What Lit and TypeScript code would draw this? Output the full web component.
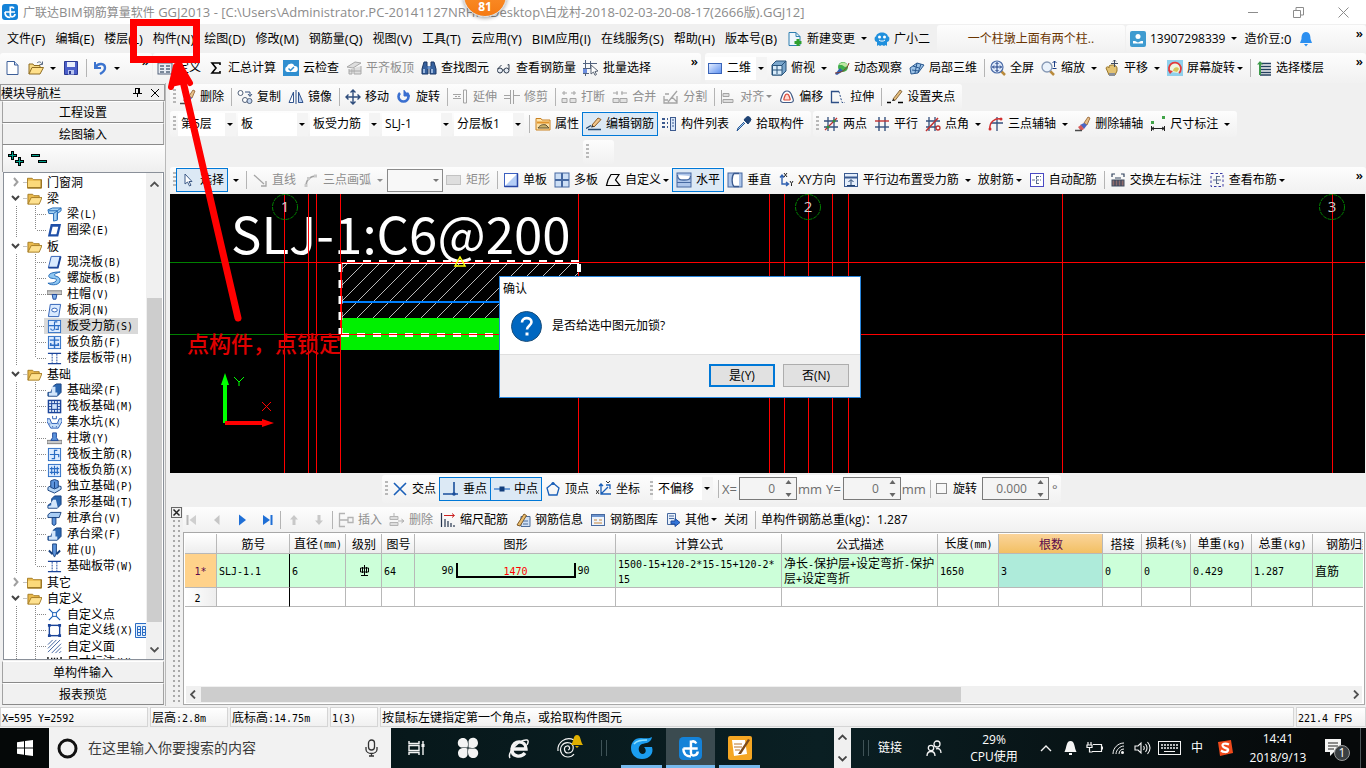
import { LitElement, html, svg, css, nothing, TemplateResult } from "lit";
import { customElement } from "lit/decorators.js";
import { classMap } from "lit/directives/class-map.js";

const BLUE = "#2a6cc4";
const GREY = "#a4a4a4";

const slab = (inner: unknown) => svg`<rect x="1.5" y="1.5" width="13" height="13" fill="#dcebff" stroke=${BLUE}/>${inner}`;

const ICONS: Record<string, unknown> = {
  app: svg`<rect width="16" height="16" rx="3" fill="#1482d8"/><path d="M8.300 2.500V8M3 8h10M3 8c0 3.500 2 5.500 5.300 5.500M8.300 8v3c0 3 4.700 2 4.700-1M8.300 3.500c1.500-.8 3-.3 3.700 1" fill="none" stroke="#fff" stroke-width="1.700"/>`,
  doc: svg`<path d="M2 1.500h7.500l3.500 3.500v9.500h-11z" fill="#fff" stroke="#3d5f99"/><path d="M9.500 1.500v3.500h3.500" fill="#cfe0f7" stroke="#3d5f99"/>`,
  open: svg`<path d="M1 14V4h4l1 1.500h6V8" fill="#f6d983" stroke="#8f6d22"/><path d="M1 14l3-6.500h11.500L12 14z" fill="#ffe08a" stroke="#8f6d22"/><path d="M9 3c2-2 4-1 5 1M14.500 1.500v3h-3" fill="none" stroke="#5a6b84"/>`,
  save: svg`<path d="M1.500 1.500h13v13h-13z" fill="#4b5fc9" stroke="#2c3a93"/><path d="M4 2h8v5H4z" fill="#e9eefb"/><path d="M5 10h6v4.500H5z" fill="#b9c5ef"/><path d="M6 11h2v3H6z" fill="#2c3a93"/>`,
  undo: svg`<path d="M3 2v6h6" fill="none" stroke="#3c74cf" stroke-width="2"/><path d="M3.500 7.500C6 2.500 13 3 13 8c0 3-2.500 4.500-5 6" fill="none" stroke="#3c74cf" stroke-width="2.400"/>`,
  define: svg`<rect x="1" y="3" width="14" height="11" fill="#e7ecf3" stroke="#56657c"/><path d="M3 6h4M3 9h4M3 12h4M9 6h4M9 9h4M9 12h4" stroke="#56657c" stroke-width="1.400"/>`,
  sigma: svg`<path d="M12 5V3H4l4 5-4 5h8v-2" fill="none" stroke="#000" stroke-width="1.600"/>`,
  cloud: svg`<rect width="16" height="16" fill="#2f8ed0"/><path d="M4 12a3 3 0 0 1 0-5.500 4 4 0 0 1 7.500-.5A3 3 0 0 1 12 12z" fill="#fff"/><path d="M5.500 8.500l2 2 3.500-3.500" fill="none" stroke="#2f8ed0" stroke-width="1.500"/>`,
  flat: svg`<path d="M1 7l8-5 6 1-8 5zM3 9v5h3V9M8 8v6h7V6" fill="#dedede" stroke="#a8a8a8"/><path d="M3 11h12" stroke="#a8a8a8"/>`,
  binoc: svg`<path d="M3 2h3v4l1 1v7H1V9zM10 2h3l2 7v5H9V7l1-1z" fill="#35609d" stroke="#1b3764"/><path d="M6.500 6h3v3h-3z" fill="#6b93cb"/><path d="M3 9v4M11 9v4" stroke="#b9d0f0" stroke-width="1.500"/>`,
  glasses: svg`<circle cx="4" cy="10.500" r="2.500" fill="#e6ecf4" stroke="#2e3a4c"/><circle cx="10.500" cy="10.500" r="2.500" fill="#e6ecf4" stroke="#2e3a4c"/><path d="M1.500 9l4-4M13 9.500V4.500l-1.500.5M6.500 10h1.500" fill="none" stroke="#2e3a4c"/>`,
  batch: svg`<path d="M2.500 0v16M0 3.500h14M0 8.500h8M0 13.500h6M7.500 1v7" stroke="#51617d"/><path d="M0 9h4v4H0z" fill="#6d8ee0"/><path d="M8 5l7 6-3 .5 1.500 3-1.500.8-1.500-3.300-2.500 2z" fill="#fff" stroke="#5a6474"/>`,
  plan: svg`<defs><linearGradient id="pl" x1="0" y1="0" x2="1" y2="1"><stop offset="0" stop-color="#e8f0ff"/><stop offset="1" stop-color="#5b8ff0"/></linearGradient></defs><rect x="1.500" y="3.500" width="13" height="10" fill="url(#pl)" stroke="#3a64b8"/>`,
  cube: svg`<path d="M1 5l4-4h10v10l-4 4H1z" fill="#7aa6cc" stroke="#27527a"/><path d="M1.500 5.500H11V15H1.500z" fill="#d9ecfa" stroke="#27527a"/><path d="M11 5l4-4M6 5v9M2 10h9" stroke="#27527a"/>`,
  orbit: svg`<circle cx="9" cy="7" r="5" fill="#3fae49"/><path d="M5 5c2-4 8-3 9 1l-3 1-3-2z" fill="#bfe7a2"/><path d="M1 14l5-6 3 3-6 4z" fill="#2f5fb3"/><path d="M1 13c6 0 12-3 14-10" fill="none" stroke="#8a3a2a"/>`,
  local3d: svg`<path d="M1 8l7-5 7 2-6 8-7 1z" fill="#9cc2e6" stroke="#29588f"/><path d="M4 6l6 2M3 10l7 1M8 3l-2 10M12 4l-3 9" stroke="#29588f"/>`,
  full: svg`<path d="M10.500 10.500l4.500 4.500" stroke="#b98a3c" stroke-width="2.500"/><circle cx="7" cy="7" r="6" fill="#dfeafa" stroke="#4b6ca8" stroke-width="1.200"/><path d="M7 2.500v9M2.500 7h9M5.500 4L7 2.500 8.500 4M5.500 10L7 11.500 8.500 10M4 5.500L2.500 7 4 8.500M10 5.500L11.500 7 10 8.500" fill="none" stroke="#1d3f86"/>`,
  zoom: svg`<path d="M8 10l5 5" stroke="#b98a3c" stroke-width="2.500"/><circle cx="6" cy="7" r="5" fill="#eaf2fb" stroke="#8799b5" stroke-width="1.300"/><path d="M13.500 1v6M11.500 3l2-2 2 2M11.500 8.500h4" fill="none" stroke="#1d3f86"/>`,
  pan: svg`<path d="M2 8c1-2 2-1 3 0V6c2-2 8-1 8 2v3l-2 4H5z" fill="#e3c272" stroke="#96742a"/><path d="M10.500 0v7M7 3.500h7M9 1.500L10.500 0 12 1.500" fill="none" stroke="#3d4a60"/><path d="M5 13h6v3H5z" fill="#8a8f99"/>`,
  screenrot: svg`<rect width="16" height="16" fill="#8fd0ec"/><path d="M3 12a6 6 0 1 1 9 1" fill="#eef7e2" stroke="#e23b3b" stroke-width="1.800"/><path d="M6 11c0-4 5-5 6-2l-2 3z" fill="#d7c75a"/><path d="M1 10l2 4 3-3z" fill="#e23b3b"/>`,
  floors: svg`<path d="M4 3.500h11M4 6.500h11M4 9.500h11M4 12.500h11M4 15h11" stroke="#24405f" stroke-width="1.500"/><path d="M4 1L1 4.500h2V15h2V4.500h2z" fill="#3d9a4a"/>`,
  brush: svg`<path d="M9 7l4-6 2 1-3 7z" fill="#e8c08a" stroke="#8d5a2a" stroke-width=".8"/><path d="M5 9l4-2 3 2-3 4z" fill="#4a66c4"/><path d="M3 11l3-2 3 4-3 2z" fill="#d65b5b"/><path d="M0 14.500h7" stroke="#4a4a4a" stroke-width="1.500"/>`,
  copy: svg`<circle cx="3.500" cy="4" r="2.500" fill="#fff" stroke="#53627a"/><circle cx="8" cy="11" r="2.500" fill="#fff" stroke="#53627a"/><circle cx="12.500" cy="12" r="2.500" fill="#c5d8f2" stroke="#53627a"/><path d="M8 3h5v4M11 5l2 2.500L15 5" fill="none" stroke="#39537f"/>`,
  mirror: svg`<path d="M5.500 3v10.500H1z" fill="#fff" stroke="#31538c"/><path d="M10.500 3v10.500H15z" fill="#b9d0f3" stroke="#31538c"/><path d="M8 1v14" stroke="#31538c"/>`,
  move: svg`<path d="M8 1v14M1 8h14M5.500 3.500L8 1l2.500 2.500M5.500 12.500L8 15l2.500-2.500M3.500 5.500L1 8l2.500 2.500M12.500 5.500L15 8l-2.500 2.500" fill="none" stroke="#2f4d7c" stroke-width="1.400"/>`,
  rotate: svg`<path d="M4 4a5 5 0 1 0 7 0" fill="none" stroke="#3a6fd0" stroke-width="2.600"/><path d="M8 1v6h6" fill="#3a6fd0" stroke="#3a6fd0"/>`,
  extend: svg`<path d="M0 5.500h8M0 9.500h8M10.500 1v13h3V1z" fill="none" stroke=${GREY}/><path d="M2 7.500h6" stroke=${GREY} stroke-dasharray="2 1"/>`,
  trim: svg`<path d="M6.500 1v14M9.500 1v14M0 6.500h6M0 9.500h6M10 6.500h6" fill="none" stroke=${GREY}/>`,
  brk: svg`<path d="M1 4h5M10 4h5M3 2v4M13 2v4M1 9.500h5v4H1zM9 9.500h6v4H9z" fill="#e2e2e2" stroke=${GREY}/>`,
  merge: svg`<path d="M1 4h5M9 4h6M5 2v4M10 2v4M1 9.500h6v4H1zM8 9.500h7v4H8z" fill="#e2e2e2" stroke=${GREY}/>`,
  split: svg`<path d="M1 7v7h13V7M1 11h4M5 13l9-11M6 5H2M9 8l5 5" fill="none" stroke=${GREY} stroke-width="1.300"/>`,
  align: svg`<path d="M1.500 1v14M3 4.500h6v3H3zM3 10.500h10v3H3z" fill="#ddd" stroke=${GREY}/>`,
  offset: svg`<path d="M8 2c3 0 4 2 5 5s3 6-1 6.500H4C0 13 2 10 3 7s2-5 5-5z" fill="#fff" stroke="#415b86" stroke-width="1.200"/><path d="M8 5c1.500 0 2 1 2.500 3s1.500 3-.5 3H6c-2 0-1-1-.5-3S6.500 5 8 5z" fill="#ffd9d0" stroke="#d84a3a" stroke-width="1.200"/>`,
  stretch: svg`<path d="M9 2.500H1.500v11H9" fill="none" stroke="#2e4f86" stroke-width="1.300"/><path d="M9 2.500l3 11h3" fill="none" stroke="#2e4f86" stroke-dasharray="2 1.500"/>`,
  pencil: svg`<path d="M0 13.500h4M11 13.500h5" stroke="#000" stroke-width="1.600"/><path d="M6 10L13 1l2 1.500-7 9z" fill="#e4bd7d" stroke="#6d4c22" stroke-width=".8"/><path d="M5 12l1-2 2 1.500z" fill="#000"/>`,
  props: svg`<path d="M1 2.500h5l1 1.500h8v10H1z" fill="#ffe3a8" stroke="#c98122"/><path d="M2 6.500h12" stroke="#e0952d" stroke-width="2"/><path d="M3 12c2-3 5-4 8-3l3 3z" fill="#c9b068" stroke="#5d5030"/>`,
  editbar: svg`<path d="M0 12.500l5-3M2 13.500h13" stroke="#24486f" stroke-width="1.400"/><path d="M6 9L12 2l3 1.500L8 11z" fill="#f0c58b" stroke="#8c5a24"/><path d="M5 11.500L6 9l2 2z" fill="#333"/>`,
  list: svg`<path d="M1 3h3M1 7h3M1 11h3M6 3h1M6 7h1M6 11h1" stroke="#3c5a8f" stroke-width="2"/><rect x="9.500" y="1.500" width="5" height="13" fill="#d8e6f8" stroke="#3c5a8f"/><path d="M11 4h2M11 7h2M11 10h2" stroke="#3c5a8f"/>`,
  pick: svg`<path d="M9 7L3 13l-2 2 1-3 6-6" fill="#a6cdf2" stroke="#2b5a96"/><path d="M8 4l4 4 1.500-2 .5-.5a2.500 2.500 0 0 0-4-4L9.500 2z" fill="#1f4374" stroke="#1f4374"/>`,
  twopt: svg`<path d="M5 1v14M11 1v14M1 5h14M1 11h14" stroke="#34507d" stroke-width="1.300"/><path d="M2 14L14 2" stroke="#c03030" stroke-width="1.300"/><circle cx="5" cy="11" r="1.500" fill="#2e8f3c"/><circle cx="11" cy="5" r="1.500" fill="#2e8f3c"/>`,
  parallel: svg`<path d="M5 1v14M11 1v14" stroke="#34507d" stroke-width="1.400"/><path d="M1 5h14" stroke="#c03030" stroke-width="1.400"/><path d="M1 11h14" stroke="#34507d" stroke-width="1.400"/>`,
  ptangle: svg`<path d="M4 1v14M10 1v14M1 5h14M1 11h10" stroke="#34507d" stroke-width="1.300"/><path d="M1 15L13 2" stroke="#c03030" stroke-width="1.500"/><circle cx="13" cy="12" r="2" fill="none" stroke="#c03030" stroke-width="1.300"/>`,
  arcaxis: svg`<path d="M9 1v14M3 7h12" stroke="#34507d" stroke-width="1.300"/><path d="M2 13C1 6 7 2 13 3" fill="none" stroke="#d13030" stroke-width="1.500"/><circle cx="2" cy="13" r="1.500" fill="#d13030"/><circle cx="13" cy="3" r="1.500" fill="#d13030"/>`,
  dim: svg`<path d="M1.500 15V10M14.500 15V10M1 12.500h14M4 11l-2.500 1.500L4 14M12 11l2.500 1.500L12 14" fill="none" stroke="#222"/><path d="M1 5h3v3H1zM12 0h3v3h-3z" fill="#40a348"/>`,
  cursor: svg`<path d="M5 2v10l2.500-2 2 4 1.500-.8-2-3.700h3z" fill="#fff" stroke="#3d5b88"/>`,
  line: svg`<path d="M2 3l10 9" stroke=${GREY} stroke-width="1.300"/><path d="M14 9v5H9" fill="none" stroke=${GREY} stroke-width="1.300"/>`,
  arc: svg`<path d="M3 14C3 8 7 4 13 4" fill="none" stroke=${GREY} stroke-width="1.500"/><path d="M1.500 12h3v3h-3zM11 2.500h3v3h-3zM4 5h3v3H4z" fill="#c9c9c9"/>`,
  rect: svg`<rect x=".5" y="3.500" width="14" height="9" fill="#dedede" stroke="#c2c2c2"/>`,
  slab1: svg`<rect x="1.500" y="1.500" width="13" height="13" fill="#fff" stroke="#3b5fc0"/><path d="M14 2v12H2z" fill="#b4cdf6"/><path d="M1.500 14.500h13v-13" stroke="#2745a3" stroke-width="1.500" fill="none"/>`,
  slab4: svg`<rect x="1" y="1" width="14" height="14" fill="#cddff5" stroke="#4669a1"/><path d="M8 1v14M1 8h14" stroke="#4669a1" stroke-width="2"/>`,
  custom: svg`<path d="M6 2.500h8L10.500 8l4.500 5.500H1.500L3 8z" fill="none" stroke="#000" stroke-width="1.200"/>`,
  horiz: svg`<rect x="1" y="1" width="14" height="14" fill="#aec6ea" stroke="#4669a1"/><path d="M1.500 3c0 5 3 5 6.500 5s6.500 0 6.500-4" fill="#fff" stroke="#4669a1" stroke-width="1.300"/><path d="M1 10.500h14" stroke="#4669a1"/>`,
  vert: svg`<rect x="1" y="1" width="14" height="14" fill="#aec6ea" stroke="#4669a1"/><path d="M12 1.500H7C4.500 4 4.500 12 7 14.500h5" fill="#fff" stroke="#3a5a90" stroke-width="1.300"/>`,
  xy: svg`<path d="M4 4v8h6M2 5.500L4 3l2 2.500M8 10l2.500 2L8 14" fill="none" stroke="#2e5fb0" stroke-width="1.400"/><path d="M6 1l3 4M9 1L6 5M12 9l1.500 2.500L15 9M13.500 11.500V14" fill="none" stroke="#222"/>`,
  edge: svg`<rect x="1.500" y="1.500" width="13" height="13" fill="#e4eefb" stroke="#3a5a90"/><path d="M1 5.500h14" stroke="#3a5a90" stroke-width="2"/><path d="M8 13V8M5.500 10L8 7.500 10.500 10M4 13.500h8" fill="none" stroke="#20406f"/>`,
  auto: svg`<rect x="1.500" y="1.500" width="13" height="13" fill="#fff" stroke="#4a4ac4"/><path d="M7.500 4v8M7 4.500h5M7 11.500h3M3 8h9" fill="none" stroke="#5a6b8c" stroke-dasharray="3 1"/>`,
  swap: svg`<rect x="2" y="8" width="12" height="6" fill="#8d6b6b" stroke="#3f4c60"/><path d="M2 5V2h3M14 5V2h-3M5 6h6M5 8v6M8 8v6M11 8v6" fill="none" stroke="#33445e" stroke-width="1.200"/>`,
  viewbar: svg`<rect x="2" y="1.500" width="12" height="13" fill="none" stroke="#3a3aa4" stroke-dasharray="2.500 2"/><path d="M7.500 4v8M7 4.500h4M7 11.500h3M4 8h8" fill="none" stroke="#5a6b8c"/>`,
  newchg: svg`<path d="M2 1.500h7l4 4v9H2z" fill="#eef6fc" stroke="#2e7fb0"/><path d="M9 1.500v4h4" fill="none" stroke="#2e7fb0"/><path d="M11 8v7M7.500 11.500h7" stroke="#2fa02f" stroke-width="3"/>`,
  robot: svg`<path d="M3 15v-4C1 11 0 8 1 6c1-1 1 0 1 0 0-6 12-6 12 0 0 0 0-1 1 0 1 2 0 5-2 5v4l-1.500-1L10 15l-2-1-2 1-1.500-1z" fill="#2090dd"/><circle cx="5.500" cy="6" r="1.500" fill="#fff"/><circle cx="10.500" cy="6" r="1.500" fill="#fff"/><path d="M5 9c1.500 1.500 4.500 1.500 6 0" fill="none" stroke="#fff"/>`,
  user: svg`<rect width="16" height="16" rx="2" fill="#3f9bd0"/><circle cx="8" cy="5.500" r="2.500" fill="#fff"/><path d="M3 12.500V10h2l3 1.500L11 10h2v2.500z" fill="#fff"/>`,
  bell: svg`<path d="M8 1c4 0 4.500 4 4.500 7l1.500 4H2l1.500-4c0-3 .5-7 4.500-7z" fill="#2b8ff0"/><path d="M6 13h4l-2 2.500z" fill="#2b8ff0"/>`,
  cross: svg`<path d="M2 2l12 12M14 2L2 14" stroke="#1a5fb8" stroke-width="1.600"/>`,
  perp: svg`<path d="M11 1v12M0 13h15" stroke="#1a4f9c" stroke-width="1.600"/><circle cx="11" cy="13" r="1.800" fill="#1a4f9c"/>`,
  mid: svg`<path d="M0 8h16" stroke="#4b86cf" stroke-width="1.500"/><path d="M5.500 5.500h5v5h-5z" fill="#113d7c"/>`,
  apex: svg`<path d="M8 2L14 7l-2 7H4L2 7z" fill="none" stroke="#1a5fb8" stroke-width="1.300"/><circle cx="8" cy="2.500" r="1.600" fill="#1a5fb8"/>`,
  coord: svg`<path d="M5 3v10h10M5 13l7-7M3 5l2-2 2 2M10 4h4v4" fill="none" stroke="#1a5fb8" stroke-width="1.300"/><path d="M0 9l3 4M3 9l-3 4M10 0l2 2 2-2" fill="none" stroke="#333"/>`,
  first: svg`<path d="M3.500 3v10" stroke="#b9b9b9" stroke-width="2"/><path d="M12 3v10L5.500 8z" fill="#cfcfcf"/>`,
  prev: svg`<path d="M10.500 3v10L5 8z" fill="#c6c6c6"/>`,
  next: svg`<path d="M5 2.500v11L12 8z" fill="#1f6fd6"/>`,
  last: svg`<path d="M12.500 3v10" stroke="#1f6fd6" stroke-width="2"/><path d="M4 3v10l7-5z" fill="#1f6fd6"/>`,
  up: svg`<path d="M8 3l4 4.500h-2.500V13h-3V7.500H4z" fill="#c8c8c8"/>`,
  down: svg`<path d="M8 13L4 8.500h2.500V3h3v5.500H12z" fill="#c8c8c8"/>`,
  insert: svg`<path d="M1 1.500h6M1 8h6M1 14.500h6M1.500 1v14M10 5.500h5v5h-5zM7 8h3" fill="none" stroke="#b3b3b3" stroke-width="1.300"/>`,
  remove: svg`<path d="M1 4.500h8v3H1zM1 10.500h8v3H1zM9 9h6M12.500 7l2.500 2-2.500 2M5 1v3" fill="#ddd" stroke="#b3b3b3"/>`,
  scalebar: svg`<path d="M1.500 1v14M5 7v8M8 9v6M11 11v4M14 13v2" stroke="#26364f" stroke-width="1.200"/><path d="M4 3.500h10M12 1.500l2.500 2-2.500 2" fill="none" stroke="#c22"/>`,
  barinfo: svg`<path d="M6 4.500h9v10H6z" fill="#cfe0f5" stroke="#4d6c9a"/><path d="M2 13L9 2l2.500 1.500L5 14z" fill="#e9bd70" stroke="#7d5723"/><path d="M8 9h5M8 12h5" stroke="#4d6c9a"/>`,
  barlib: svg`<rect x="1.500" y="2.500" width="13" height="11" fill="#eef4fb" stroke="#47699f"/><path d="M2 4h12" stroke="#6e95cf" stroke-width="2"/><path d="M4 8h3M9 8h3M4 11h8" stroke="#c8863c"/>`,
  other: svg`<path d="M2.500 1.500h8v11h-8z" fill="#e8f0fa" stroke="#47699f"/><path d="M4 4h5M4 6.500h5" stroke="#47699f"/><path d="M6 9h4V6.500l5 4-5 4V12H6z" fill="#3274d8" stroke="#1c4a9c"/>`,
  folder: svg`<path d="M.5 3.500h5l1.500 1.500h8.500v9H.5z" fill="#e9b94c" stroke="#a47b23"/><path d="M1 6h14v7.500H1z" fill="#fbd97a"/><path d="M1 13.500h14V5" fill="none" stroke="#8b6719"/>`,
  folderO: svg`<path d="M1 14V3.500h5l1.500 1.500H13V7" fill="#e9b94c" stroke="#a47b23"/><path d="M1 14l3.500-7H16l-3 7z" fill="#fde08e" stroke="#a47b23"/>`,
  tBeam: svg`<path d="M1 3l5-2h9v3l-4 3v7l-4 1V7H2z" fill="#a7d3f4" stroke="#1e66b4"/><path d="M2 4h9l4-3M7 7l4-3v9" fill="none" stroke="#1e66b4"/>`,
  tRing: svg`<path d="M4 1h11l-3 13.500H1z" fill="#1e4fa8"/><path d="M6 4h6l-2 8H4z" fill="#fff"/>`,
  tSlab: svg`<path d="M4.500 1.500h10l-3 12h-10z" fill="#d9eaff" stroke="#2a5cb4"/><path d="M1.500 13.500h10l3-12" fill="none" stroke="#1c459a" stroke-width="2"/>`,
  tSpiral: svg`<path d="M14 1C6 1 1 3 2 6s9 1 8 4-6 3-9 3c4 3 13 2 13-3S7 6 8 4s4-2 6-3z" fill="#8fc7f2" stroke="#1e66b4"/>`,
  tCap: svg`<path d="M0 4h16v4H0z" fill="#c8c8c8" stroke="#666" stroke-width=".8"/><path d="M5.500 8h5l-1 5h-3z" fill="#7fb0ea" stroke="#1c459a"/>`,
  tHole: svg`<path d="M3.500 1.500h11l-2 13h-11z" fill="#d9eaff" stroke="#2a5cb4"/><ellipse cx="8" cy="7.500" rx="3" ry="2" fill="#fff" stroke="#2a5cb4"/>`,
  tBar: slab(svg`<path d="M8 3v7a2 2 0 0 1-4 0M2 7h12M8 3h3M12 7v4h-3" fill="none" stroke=${BLUE} stroke-width="1.200"/>`),
  tNeg: slab(svg`<path d="M3 5.500h10M3 11h10M8 2v12M4 8.500V11M12 8.500V11" fill="none" stroke=${BLUE} stroke-width="1.500"/>`),
  tStrip: svg`<path d="M1 2.500h14M1 13.500h14" stroke="#1c459a" stroke-width="1.500"/><path d="M5.500 3v10M10.500 3v10" stroke="#1c459a" stroke-dasharray="2 1"/>`,
  tFBeam: svg`<path d="M1 14v-4h3l3-7 3-2h5v9l-4 4z" fill="#2a66b0" stroke="#16407e"/><path d="M2 13.500v-3h3V4h4v6h2v3.500z" fill="#d3e6fb"/>`,
  tRaft: svg`<rect x="1.500" y="1.500" width="13" height="13" fill="#e4effd" stroke="#1c459a" stroke-width="1.500"/><path d="M5 2v12M8 2v12M11 2v12M2 5h12M2 8h12M2 11h12" stroke="#1c459a"/><rect x="5" y="5" width="6" height="6" fill="#cfe2fa" stroke="#1c459a"/>`,
  tPit: svg`<path d="M0 4h3l2 5h6l2-5h3v3l-4 7H4L0 7z" fill="#c5defa" stroke="#2a5cb4"/><path d="M6 1v3M10 1v3M6 4h4" stroke="#2a5cb4"/><path d="M3 9v1M6 12v1M10 12v1M12 9v1" stroke="#1c459a"/>`,
  tPier: svg`<path d="M0 10h16v3.500H0z" fill="#c8c8c8" stroke="#666" stroke-width=".8"/><path d="M4 10l2-3V2h4v5l2 3z" fill="#5c94dc" stroke="#1c459a"/>`,
  tMain: slab(svg`<path d="M8 3v10M3 8h10M8 3.500h3M8 12.500H5M12.500 8v3" fill="none" stroke=${BLUE} stroke-width="1.300"/>`),
  tSub: slab(svg`<path d="M3 6h10M3 10h10M8 3v10M5 4v8M11 4v8" fill="none" stroke=${BLUE} stroke-width="1.200"/>`),
  tIso: svg`<path d="M1 9l5-3 9 2v3l-7 4-7-3z" fill="#b9d8f7" stroke="#16407e"/><path d="M4 2l4-1.500L12 2v7l-4 1.500L4 9z" fill="#5c94dc" stroke="#16407e"/><path d="M8 3v7" stroke="#16407e"/>`,
  tStripF: svg`<path d="M1 14v-3l4-3V4l3-3h7v9l-4 4z" fill="#2a66b0" stroke="#16407e"/><path d="M1.500 13.500V12l3-1V8l2-3h3l1 4 1 4.500z" fill="#d3e6fb"/>`,
  tPileCap: svg`<path d="M1 4l3-2.500h11L13 7H1z" fill="#a9cdf4" stroke="#16407e"/><path d="M5.500 7h4v7l-2 1.500-2-1.500z" fill="#5c94dc" stroke="#16407e"/>`,
  tPile: svg`<path d="M6 1h4v10l-2 4-2-4z" fill="#5c94dc" stroke="#16407e"/><path d="M2 8l4 4M14 8l-4 4" stroke="#16407e" stroke-width="2"/>`,
  tPoint: svg`<path d="M2 2l12 12M14 2L2 14" stroke="#1a5fb8" stroke-width="1.300"/><path d="M6 6h4v4H6z" fill="#fff" stroke="#1a5fb8"/>`,
  tLine: svg`<rect x="2.500" y="2.500" width="11" height="11" fill="#fff" stroke="#1c459a" stroke-width="1.500"/><path d="M1 1h3v3H1zM12 1h3v3h-3zM1 12h3v3H1zM12 12h3v3h-3z" fill="#1c459a"/>`,
  tFace: svg`<path d="M1 6l5-5M1 10l9-9M1 14l13-13M5 15L15 5M9 15l6-6M13 15l2-2" stroke="#3b5f9c"/>`,
  tDim: svg`<path d="M1 2v10M15 2v10M1 5h14M5 3v6M8 3v6M11 3v6" stroke="#111" stroke-width="1.500"/>`,
};

const ic = (name: string) => html`<svg class="ic" viewBox="0 0 16 16" aria-hidden="true">${ICONS[name]}</svg>`;

/* Wraps each Latin run of a label in a span of its own, so that it can take its own face and size. */
const latin = (s: string, cls: string) =>
  s.split(/([\x20-\x7e]+)/).filter(Boolean).map((p) => (/^[\x20-\x7e]/.test(p) ? html`<span class=${cls}>${p}</span>` : p));
const m = (s: string) => latin(s, "n");
const ui = (s: string) => latin(s, "l");

type Item = string | { i?: string; t?: string; a?: "wide" | "tight"; off?: boolean; on?: boolean };

const sep = html`<span class="sep"></span>`;
const grip = html`<span class="grip"></span>`;
const more = html`<button class="more" aria-label="更多">»</button>`;

const item = (x: Item): TemplateResult => {
  if (x === "|") return sep;
  if (x === ":") return grip;
  if (typeof x === "string") return html`<button class="tb">${x}</button>`;
  return html`<button class=${classMap({ tb: true, off: !!x.off, on: !!x.on })} aria-label=${x.t || x.i || "下拉"}>
    ${x.i ? ic(x.i) : nothing}${x.t ? html`<span>${x.t}</span>` : nothing}${x.a ? html`<i class="arr ${x.a}"></i>` : nothing}
  </button>`;
};

const combo = (label: string, value: string, cls = "") => html`<span class="combo ${cls}">
  <select aria-label=${label}><option>${value}</option></select><i class="arr"></i></span>`;

const TITLE = "广联达BIM钢筋算量软件 GGJ2013 - [C:\\Users\\Administrator.PC-20141127NRHN\\Desktop\\白龙村-2018-02-03-20-08-17(2666版).GGJ12]";

const MENUS = ["文件(F)", "编辑(E)", "楼层(L)", "构件(N)", "绘图(D)", "修改(M)", "钢筋量(Q)", "视图(V)", "工具(T)", "云应用(Y)", "BIM应用(I)", "在线服务(S)", "帮助(H)", "版本号(B)"];

const BAR_B: Item[] = [
  { i: "define", t: "定义" }, { i: "sigma", t: "汇总计算" }, { i: "cloud", t: "云检查" }, { i: "flat", t: "平齐板顶", off: true },
  { i: "binoc", t: "查找图元" }, { i: "glasses", t: "查看钢筋量" }, { i: "batch", t: "批量选择" },
];
const BAR_C: Item[] = [
  { i: "cube", t: "俯视", a: "wide" }, { i: "orbit", t: "动态观察" }, { i: "local3d", t: "局部三维" }, "|",
  { i: "full", t: "全屏" }, { i: "zoom", t: "缩放", a: "wide" }, { i: "pan", t: "平移", a: "wide" },
  { i: "screenrot", t: "屏幕旋转", a: "tight" }, "|", { i: "floors", t: "选择楼层" },
];
const BAR_EDIT: Item[] = [
  ":", { i: "brush", t: "删除" }, "|", { i: "copy", t: "复制" }, { i: "mirror", t: "镜像" }, "|", { i: "move", t: "移动" }, { i: "rotate", t: "旋转" }, "|",
  { i: "extend", t: "延伸", off: true }, { i: "trim", t: "修剪", off: true }, "|", { i: "brk", t: "打断", off: true }, { i: "merge", t: "合并", off: true },
  { i: "split", t: "分割", off: true }, "|", { i: "align", t: "对齐", off: true, a: "tight" }, { i: "offset", t: "偏移" }, { i: "stretch", t: "拉伸" }, "|",
  { i: "pencil", t: "设置夹点" },
];
const BAR_PART: Item[] = [{ i: "props", t: "属性" }, { i: "editbar", t: "编辑钢筋", on: true }, { i: "list", t: "构件列表" }, { i: "pick", t: "拾取构件" }];
const BAR_AXIS: Item[] = [
  ":", { i: "twopt", t: "两点" }, { i: "parallel", t: "平行" }, { i: "ptangle", t: "点角", a: "wide" }, { i: "arcaxis", t: "三点辅轴", a: "wide" },
  { i: "brush", t: "删除辅轴" }, { i: "dim", t: "尺寸标注", a: "wide" },
];
const BAR_SELECT: Item[] = [
  { i: "cursor", t: "选择", on: true }, { a: "tight" }, "|", { i: "line", t: "直线", off: true }, { i: "arc", t: "三点画弧", off: true, a: "wide" },
];
const BAR_DRAW: Item[] = [
  { i: "rect", t: "矩形", off: true }, "|", { i: "slab1", t: "单板" }, { i: "slab4", t: "多板" }, { i: "custom", t: "自定义", a: "tight" },
  { i: "horiz", t: "水平", on: true }, { i: "vert", t: "垂直" }, { i: "xy", t: "XY方向" }, { i: "edge", t: "平行边布置受力筋", a: "wide" },
  { t: "放射筋", a: "tight" }, { i: "auto", t: "自动配筋" }, "|", { i: "swap", t: "交换左右标注" }, { i: "viewbar", t: "查看布筋", a: "tight" },
];
const BAR_SNAP: Item[] = [
  ":", { i: "cross", t: "交点" }, { i: "perp", t: "垂点", on: true }, { i: "mid", t: "中点", on: true }, { i: "apex", t: "顶点" }, { i: "coord", t: "坐标" },
];
const BAR_GRID: Item[] = [
  { i: "insert", t: "插入", off: true }, { i: "remove", t: "删除", off: true }, { i: "scalebar", t: "缩尺配筋" }, { i: "barinfo", t: "钢筋信息" },
  { i: "barlib", t: "钢筋图库" }, { i: "other", t: "其他", a: "tight" }, "关闭", "|",
];

interface Node { t: string; i: string; lvl: 0 | 1; open?: boolean; sel?: boolean; last?: boolean; extra?: boolean }
const leaf = (t: string, i: string, o: Partial<Node> = {}): Node => ({ t, i, lvl: 1, ...o });
const TREE: Node[] = [
  { t: "门窗洞", i: "folder", lvl: 0 },
  { t: "梁", i: "folderO", lvl: 0, open: true },
  leaf("梁(L)", "tBeam"), leaf("圈梁(E)", "tRing", { last: true }),
  { t: "板", i: "folderO", lvl: 0, open: true },
  leaf("现浇板(B)", "tSlab"), leaf("螺旋板(B)", "tSpiral"), leaf("柱帽(V)", "tCap"), leaf("板洞(N)", "tHole"),
  leaf("板受力筋(S)", "tBar", { sel: true }), leaf("板负筋(F)", "tNeg"), leaf("楼层板带(H)", "tStrip", { last: true }),
  { t: "基础", i: "folderO", lvl: 0, open: true },
  leaf("基础梁(F)", "tFBeam"), leaf("筏板基础(M)", "tRaft"), leaf("集水坑(K)", "tPit"), leaf("柱墩(Y)", "tPier"), leaf("筏板主筋(R)", "tMain"),
  leaf("筏板负筋(X)", "tSub"), leaf("独立基础(P)", "tIso"), leaf("条形基础(T)", "tStripF"), leaf("桩承台(V)", "tPileCap"), leaf("承台梁(F)", "tFBeam"),
  leaf("桩(U)", "tPile"), leaf("基础板带(W)", "tStrip", { last: true }),
  { t: "其它", i: "folder", lvl: 0 },
  { t: "自定义", i: "folderO", lvl: 0, open: true },
  leaf("自定义点", "tPoint"), leaf("自定义线(X)", "tLine", { extra: true }), leaf("自定义面", "tFace"), leaf("尺寸标注(W)", "tDim"),
];

const COLS: [string, number][] = [
  ["", 32], ["筋号", 73], ["直径(mm)", 56], ["级别", 36], ["图号", 33], ["图形", 201], ["计算公式", 166], ["公式描述", 156], ["长度(mm)", 61],
  ["根数", 104], ["搭接", 39], ["损耗(%)", 49], ["单重(kg)", 61], ["总重(kg)", 61], ["钢筋归类", 74],
];

const V_AXES = [284, 308, 316, 340, 578, 769, 784, 808, 832, 848, 1062, 1332];
const BUBBLES: [number, string][] = [[285, "1"], [808, "2"], [1332, "3"]];

@customElement("app-root")
export class AppRoot extends LitElement {
  static styles = css`
    :host {
      display: flex; flex-direction: column; position: relative; height: 100vh; overflow: hidden; background: #f0f0f0; color: #000;
      font: 12px/16px "Open Sans", "Noto Sans CJK SC", sans-serif;
    }
    * { box-sizing: border-box; }
    button, input, select { font: inherit; color: inherit; border: 0; background: none; padding: 0; margin: 0; border-radius: 0; outline: 0; }
    button { white-space: nowrap; display: inline-flex; align-items: center; flex: none; }
    svg { display: block; flex: none; }
    .ic { width: 16px; height: 16px; }
    .n { font-family: "DejaVu Sans Mono", monospace; font-size: 10px; }
    .l { font-size: 13px; white-space: pre; }
    .song { font-family: "Noto Sans CJK SC", sans-serif; }

    .title { display: flex; align-items: center; height: 24px; flex: none; background: #fff; color: #8c8c8c; padding-left: 2px; }
    .title h1 { flex: 1; margin: 0 0 0 5px; font: inherit; white-space: nowrap; overflow: hidden; }
    .title button { width: 45px; height: 20px; justify-content: center; }

    .menu { display: grid; grid-template-columns: 936px 188px 1fr; gap: 1px; height: 29px; flex: none; padding: 1px 0; }
    .menu nav { display: flex; align-items: center; gap: 10px; padding-left: 7px; overflow: hidden; }
    .menu nav .tb { margin: 0 -3px 0 0; }
    .strip { display: flex; align-items: center; background: linear-gradient(#fdfdfd, #f1f1f1); border-radius: 3px; position: relative; white-space: nowrap; min-width: 0; }
    .news { justify-content: center; color: #6a3500; }
    .acct { padding-left: 4px; }

    .tb { margin-right: 7px; height: 24px; }
    .tb .ic { margin-right: 4px; }
    .tb.off { color: #8e8e8e; }
    .tb.on { background: #dce9f5; border: 1px solid #0078d7; padding: 0 3px; margin: 0 3px 0 -4px; }
    .arr { border: 3px solid transparent; border-top-color: #000; border-bottom: 0; width: 6px; height: 3px; flex: none; }
    .arr.wide { margin-left: 6px; }
    .arr.tight { margin-left: 2px; }
    .off .arr { border-top-color: #8e8e8e; }
    .icon-only .ic { margin-right: 0; }
    .sep { width: 1px; height: 18px; background: #b4b4b4; margin-right: 5px; flex: none; }
    .grip { width: 3px; height: 16px; margin: 0 4px 0 3px; flex: none; background: repeating-linear-gradient(#b8b8b8 0 2px, transparent 2px 4px); }
    .grip + .combo { margin-left: -2px; }
    .more { position: absolute; right: 3px; top: 0; font-size: 13px; height: 16px; font-weight: 600; }
    .combo { display: inline-flex; align-items: center; width: 70px; height: 23px; margin-right: 2px; background: linear-gradient(90deg, #fff 0 calc(100% - 11px), #f4f4f4 0); position: relative; flex: none; }
    .combo select { appearance: none; flex: 1; min-width: 0; height: 23px; padding-left: 3px; }
    .combo .arr { position: absolute; right: 3px; pointer-events: none; }
    .combo.s { width: 58px; }
    .combo.l5 { margin-right: 5px; }
    .combo.box { width: 56px; border: 1px solid #8a8a8a; margin-right: 3px; background: #f8f8f8; margin-left: -3px; }
    .combo.box .arr { border-top-color: #777; }
    .combo.ico select { padding-left: 4px; }

    .row3 { display: flex; height: 30px; flex: none; gap: 1px; }
    .bar-a { width: 152px; padding-left: 5px; flex: none; }
    .bar-b { width: 548px; padding-left: 4px; flex: none; margin-right: 3px; }
    .bar-c { flex: 1; }
    .bar-c .combo { width: 62px; margin-right: 4px; padding-left: 2px; }

    .body { display: flex; flex: 1; min-height: 0; }
    .side { width: 166px; margin-right: 4px; flex: none; display: flex; flex-direction: column; border-right: 1px solid #b9b9b9; padding-bottom: 1px; }
    .side-head { display: flex; align-items: center; height: 17px; margin-top: 1px; border: 1px solid #9a9a9a; flex: none; }
    .side-head span { flex: 1; }
    .side-head button { width: 18px; justify-content: center; }
    .side-btn { height: 22px; margin: 0 1px 0 2px; border: 1px solid #a2a2a2; border-bottom-color: #8a8a8a; justify-content: center; background: #f1f1f1; border-top-color: #fff; }
    .side-tools { display: flex; align-items: center; height: 27px; margin-left: 2px; padding-left: 5px; gap: 7px; background: linear-gradient(#fdfdfd, #eee); flex: none; border-left: 1px solid #a2a2a2; }
    .tree { flex: 1; min-height: 0; margin: 0 1px 1px 3px; border: 1px solid #8a9099; background: #fff; display: flex; overflow: hidden; }
    .tree ul { list-style: none; margin: 0; padding: 1px 0 0; flex: 1; min-width: 0; overflow: hidden; }
    .tree li { display: flex; align-items: center; height: 16px; white-space: nowrap; }
    .tree li .ic { width: 15px; height: 15px; }
    .tree li > svg { overflow: visible; }
    .node { display: flex; align-items: center; height: 16px; padding: 0 2px 0 3px; gap: 5px; }
    .node.sel { background: #d9d9d9; padding-right: 5px; }
    .vscroll { width: 16px; background: #f0f0f0; display: flex; flex-direction: column; align-items: center; flex: none; margin-right: 1px; padding: 8px 0 6px; }
    .vscroll i { width: 15px; flex: 321; background: #cdcdcd; margin-bottom: 25px; }
    .vscroll .top { flex: 110; background: none; margin: 0; }

    .main { flex: 1; min-width: 0; display: flex; flex-direction: column; }
    .r { display: flex; align-items: center; height: 28px; flex: none; gap: 2px; }
    .r.first { height: 27px; }
    .r .strip { height: 26px; }
    .r .grow { flex: 1; }
    .r .stub { height: 24px; width: 31px; margin-left: 413px; }
    .canvas { flex: 1; min-height: 0; position: relative; background: #000; overflow: hidden; margin-right: 1px; }
    .canvas > svg { width: 100%; height: 100%; }

    .dialog { position: absolute; left: 329px; top: 82px; width: 362px; background: #fff; border: 1px solid #2a86dc; display: flex; flex-direction: column; }
    .dialog h2 { font: inherit; margin: 4px 3px; }
    .dialog .msg { display: flex; align-items: center; gap: 10px; height: 53px; padding: 0 0 3px 11px; }
    .dialog .foot { display: flex; justify-content: flex-end; gap: 8px; padding: 9px 11px 10px; background: #f0f0f0; border-top: 1px solid #dfdfdf; }
    .dialog .foot button { width: 66px; height: 23px; justify-content: center; background: #e1e1e1; border: 1px solid #adadad; }
    .dialog .foot .def { border: 2px solid #0078d7; }

    .snap { display: flex; align-items: center; height: 31px; flex: none; padding-left: 212px; }
    .snap .strip { height: 28px; padding-right: 4px; }
    .snap label { color: #6d6d6d; display: inline-flex; align-items: center; gap: 2px; font-size: 13px; }
    .snap .combo { width: 60px; margin: 0 5px 0 -4px; }
    .snap .combo select { padding-left: 5px; }
    .snap .combo + .sep { margin-right: 3px; }
    .spin { display: inline-flex; align-items: center; width: 58px; height: 23px; border: 1px solid #7a7a7a; background: #f4f4f4; padding-right: 4px; color: #6d6d6d; font-size: 12px; }
    .spin input { flex: 1; min-width: 0; text-align: right; padding-right: 10px; color: #6d6d6d; }
    .spin.w { width: 67px; }
    .snap .u { color: #6d6d6d; font-size: 13px; margin: 0 4px 0 1px; }
    .snap .deg { margin: 0 0 0 3px; }
    .snap input[type="checkbox"] { appearance: none; width: 11px; height: 11px; border: 1px solid #8a8a8a; margin-right: 6px; background: #f7f7f7; }
    .snap .rot { color: #000; font-size: 12px; margin-right: 5px; }

    .bottom { display: flex; height: 202px; flex: none; padding-top: 3px; }
    .split { width: 13px; flex: none; display: flex; flex-direction: column; align-items: center; gap: 2px; }
    .split i { width: 8px; flex: 1; margin-bottom: 2px; background-image: radial-gradient(circle at 1px 1px, #a9a9a9 1px, transparent 1px); background-size: 5px 5px; }
    .pane { flex: 1; min-width: 0; display: flex; flex-direction: column; }
    .pane .strip { height: 25px; border-radius: 0; padding-left: 1px; }
    .nav2 { margin-right: 9px; height: 24px; }
    .nav2:has(+ .sep) { margin-right: 5px; }
    .sheet { flex: 1; min-height: 0; background: #fff; border: 1px solid #a8a8a8; margin: 0 1px 1px 0; padding: 1px; display: flex; flex-direction: column; }
    .clip { flex: 1; overflow: hidden; }
    table { border-collapse: separate; border-spacing: 0; table-layout: fixed; width: 1202px; line-height: 13px; }
    th, td { padding: 0 1px 0 2px; border-right: 1px solid #b8b8b8; border-bottom: 1px solid #b8b8b8; text-align: left; font-weight: 400; white-space: nowrap; overflow: hidden; }
    thead th { height: 20px; text-align: center; background: linear-gradient(#fff, #ededed); }
    thead .hot { background: linear-gradient(#fbd49b, #f2c063); color: #5a0a4a; }
    tbody th { text-align: center; background: linear-gradient(90deg, #fff, #eee); padding-right: 8px; }
    .cur td { height: 34px; background: #ccffd9; }
    .cur th { background: #ffd28a; color: #5a0a4a; padding-right: 2px; }
    .cur .cell { background: #aeebda; }
    .cur .wrap { white-space: normal; word-break: break-all; }
    .nxt td, .nxt th { height: 19px; }
    .mark { border-right-color: #000; }
    .shape { display: flex; align-items: center; justify-content: center; gap: 2px; }
    .shape b { width: 120px; height: 15px; border: solid #000; border-width: 0 2px 2px; text-align: center; color: #f00; font-weight: 400; }
    .mid svg { margin: 0 auto; }
    .hscroll { height: 17px; background: #f0f0f0; display: flex; align-items: center; justify-content: space-between; padding: 0 3px 0 4px; margin: 0 1px; flex: none; }
    .hscroll i { height: 15px; width: 760px; background: #cdcdcd; margin: 0 auto 0 5px; }

    .status { display: flex; height: 22px; flex: none; gap: 2px; padding: 1px 0; background: #f0f0f0; }
    .status span:not(.n) { border: 1px solid #d5d5d5; background: linear-gradient(#fff, #f0f0f0); padding: 1px; white-space: nowrap; overflow: hidden; flex: none; }
    .status .a { width: 148px; } .status .b { width: 78px; } .status .c { width: 98px; } .status .d { width: 48px; }
    .status .e.e { flex: 1; } .status .f { width: 70px; }

    .task { display: flex; height: 40px; flex: none; background: linear-gradient(90deg, #040a0b, #07181b 30%, #0a1f23 60%, #06090a 96%); color: #fff; align-items: stretch; }
    .task button { justify-content: center; }
    .start { width: 49px; background: #050808; }
    .search { display: flex; align-items: center; width: 342px; background: #f2f2f2; color: #3b3b3b; padding: 0 13px 0 8px; gap: 10px; font-size: 14px; flex: none; }
    .search input { flex: 1; min-width: 0; }
    .search input::placeholder { color: #3b3b3b; opacity: 1; }
    .app { width: 51px; }
    .app + .bars { margin-right: 5px; }
    .run { width: 41px; margin: 0 4px; border-bottom: 3px solid #76b9ed; padding-top: 3px; }
    .run.cur2 { width: 49px; margin: 0; background: #3b4b50; }
    .bars { width: 17px; display: flex; align-items: center; justify-content: center; flex: none; }
    .bars::before { content: ""; width: 4px; height: 16px; border: solid #3f5357; border-width: 0 1px; }
    .sp { flex: 1; }
    .updn { width: 17px; background: #f0f0f0; display: flex; flex-direction: column; align-items: center; justify-content: space-between; padding: 6px 0; margin-right: 6px; }
    .link { width: 32px; margin-right: 7px; }
    .ppl { width: 42px; margin-right: 1px; }
    .cpu, .clock { display: flex; flex-direction: column; justify-content: center; text-align: center; line-height: 17px; width: 76px; flex: none; }
    .clock { line-height: 19px; }
    .cpu { margin-right: 2px; }
    .tray { width: 24px; } .kb { width: 31px; }
    .note { width: 45px; border-right: 1px solid #4c5558; margin-right: 5px; }
    .ink { position: absolute; left: 0; top: 0; width: 360px; height: 330px; pointer-events: none; }
    .ball { position: absolute; left: 463px; top: -27px; width: 44px; height: 44px; border-radius: 50%; background: linear-gradient(#ff9d3c, #f57a12); border: 1px solid #d9dde0; box-shadow: 0 1px 4px #0006; color: #fff; font-weight: 700; text-align: center; padding-top: 25px; }
  `;

  private treeRow(n: Node) {
    const guide = n.lvl === 0
      ? svg`${n.open
          ? svg`<path d="M8 6l3.500 3.500L15 6" fill="none" stroke="#444" stroke-width="2"/>`
          : svg`<path d="M10 4l3.500 4L10 12" fill="none" stroke="#a0a0a0" stroke-width="2"/>`}
          <path d="M19.500 8.500h4" stroke="#888" stroke-dasharray="1 1"/>`
      : svg`<path d="M12.500 0v16M31.500 0v${n.last ? 8 : 16}M33 8.500h10" stroke="#888" stroke-dasharray="1 1" fill="none"/>`;
    const w = n.lvl ? 40 : 20;
    return html`<li>
      <svg width=${w} height="16" aria-hidden="true">${guide}</svg>
      <span class=${classMap({ node: true, sel: !!n.sel })}>${ic(n.i)}<span>${m(n.t)}</span></span>
      ${n.extra ? html`<svg width="13" height="15" viewBox="0 0 13 15"><path d="M.5.5h12v14H.5zM2.500 3.500h3v9h-3zM7.500 3.500h3v9h-3zM2.500 6.500h3M7.500 6.500h3M2.500 9.500h3M7.500 9.500h3" fill="#e6f1fc" stroke="#2a6cc4"/></svg>` : nothing}
    </li>`;
  }

  private canvas() {
    return html`<section class="canvas" aria-label="绘图区">
      <svg>
        <defs>
          <pattern id="hatch" width="16" height="16" patternUnits="userSpaceOnUse" x="175" y="68">
            <path d="M0 16L16 0M-1 1L1-1M15 17L17 15" stroke="#b8b8b8" stroke-width="1"/>
          </pattern>
          <linearGradient id="green"><stop offset=".93" stop-color="#00f000"/><stop offset="1" stop-color="#00c800"/></linearGradient>
        </defs>
        <g transform="translate(-170 -194)">
          <text x="231" y="254" font-size="51" fill="#fff" font-family="Noto Sans CJK SC">SLJ-1:C6@200</text>
          <rect x="341" y="263" width="237" height="55" fill="url(#hatch)"/>
          <rect x="341" y="318" width="170" height="32" fill="url(#green)"/>
          <path d="M341 302h237" stroke="#0080ff" stroke-width="2"/>
          ${V_AXES.map((x) => svg`<path d=${`M${x}.500 194V1200`} stroke="#f00"/>`)}
          <path d="M170 262.500H284M170 334.500H284" stroke="#008000"/>
          <path d="M284 262.500H4000M284 334.500H4000" stroke="#f00"/>
          <path d="M347 262H579M340.500 264v70M579 264v12M341 335H579" fill="none" stroke="#fff" stroke-width="4" stroke-dasharray="8 8"/>
          <path d="M341 263.500H578" stroke="#fff"/>
          <path d="M340 262.500H579M341.500 262v73M341 334.500H579" stroke="#f00"/>
          <path d="M455 266h10l-5-9z" fill="none" stroke="#ff0" stroke-width="1.500"/>
          ${BUBBLES.map(([x, t]) => svg`<circle cx=${x} cy="207" r="12.500" fill="none" stroke="#008000" stroke-dasharray="4 1"/>
            <text x=${x} y="212" font-size="15" fill="#ccc" text-anchor="middle">${t}</text>`)}
          <path d="M225 423V384" stroke="#0f0" stroke-width="4"/><path d="M221 385l4-12 4 12z" fill="#0f0"/>
          <path d="M225 423h38" stroke="#f00" stroke-width="4"/><path d="M262 419l12 4-12 4z" fill="#f00"/>
          <path d="M234 377l5 5 5-5M239 382v4" fill="none" stroke="#0f0"/><path d="M262 402l9 9M271 402l-9 9" stroke="#f00"/>
          <text x="187" y="352" font-size="22" fill="#e00000" font-weight="500" font-family="Noto Sans CJK SC">点构件，点锁定</text>
        </g>
      </svg>
      <div class="dialog" role="dialog" aria-labelledby="dt">
        <h2 id="dt">确认</h2>
        <div class="msg">
          <svg width="31" height="31" viewBox="0 0 31 31"><circle cx="15.500" cy="15.500" r="15" fill="#0067c0" stroke="#1a4f7c"/>
            <path d="M11 11.500c0-6 9.500-5.500 9.500-.5 0 3.500-4.500 4-4.500 7.500" fill="none" stroke="#fff" stroke-width="2.600"/><path d="M14.500 21.500h3v3h-3z" fill="#fff"/></svg>
          <span>是否给选中图元加锁?</span>
        </div>
        <div class="foot"><button class="def">是(Y)</button><button>否(N)</button></div>
      </div>
    </section>`;
  }

  private spin(id: string, v: string, cls = "") {
    return html`<span class="spin ${cls}"><input id=${id} .value=${v} aria-label=${id} />
      <svg width="7" height="17" viewBox="0 0 7 17"><path d="M.500 4L3.500 0l3 4zM.500 13l3 4 3-4z" fill="#666"/></svg></span>`;
  }

  private sheet() {
    return html`<div class="sheet song">
      <div class="clip"><table>
        <colgroup>${COLS.map(([, w]) => html`<col style="width:${w}px">`)}</colgroup>
        <thead><tr>${COLS.map(([t]) => html`<th class=${classMap({ hot: t === "根数" })}>${m(t)}</th>`)}</tr></thead>
        <tbody>
          <tr class="cur">
            <th>${m("1*")}</th><td class="mark">${m("SLJ-1.1")}</td><td>${m("6")}</td>
            <td class="mid"><svg width="11" height="11" viewBox="0 0 11 11"><path d="M5.500 0v10M2 10.500h7M1.500 3h8v4h-8zM3.500 2v6M7.500 2v6" fill="none" stroke="#000"/></svg></td>
            <td>${m("64")}</td><td><div class="shape">${m("90")}<b>${m("1470")}</b>${m("90")}</div></td>
            <td class="wrap">${m("1500-15+120-2*15-15+120-2*15")}</td><td class="wrap">${m("净长-保护层+设定弯折-保护层+设定弯折")}</td>
            <td>${m("1650")}</td><td class="cell">${m("3")}</td><td>${m("0")}</td><td>${m("0")}</td><td>${m("0.429")}</td><td>${m("1.287")}</td><td>直筋</td>
          </tr>
          <tr class="nxt"><th>${m("2")}</th>${COLS.slice(1).map((_, k) => html`<td class=${classMap({ mark: k === 0 })}></td>`)}</tr>
        </tbody>
      </table></div>
      <div class="hscroll">
        <svg width="6" height="9" viewBox="0 0 6 9"><path d="M5 .5l-4 4 4 4" fill="none" stroke="#505050" stroke-width="1.800"/></svg><i></i>
        <svg width="6" height="9" viewBox="0 0 6 9"><path d="M1 .5l4 4-4 4" fill="none" stroke="#505050" stroke-width="1.800"/></svg>
      </div>
    </div>`;
  }

  private taskbar() {
    const w = "#f4f4f4";
    return html`<footer class="task">
      <button class="start" aria-label="开始"><svg width="16" height="16" viewBox="0 0 16 16"><path d="M0 2.200l7-1v6.300H0zM8 1l8-1v7.500H8zM0 8.500h7v6.300l-7-1zM8 8.500h8V16l-8-1z" fill="#fff"/></svg></button>
      <label class="search">
        <svg width="21" height="21" viewBox="0 0 21 21"><circle cx="10.500" cy="10.500" r="8.500" fill="none" stroke="#111" stroke-width="3"/></svg>
        <input aria-label="搜索" placeholder="在这里输入你要搜索的内容" />
        <svg width="13" height="18" viewBox="0 0 13 18"><rect x="3.500" y="1" width="6" height="10" rx="3" fill="none" stroke="#333" stroke-width="1.300"/><path d="M1 8v2.500a5.500 4 0 0 0 11 0V8M6.500 14v3M4 17h5" fill="none" stroke="#333" stroke-width="1.300"/></svg>
      </label>
      <button class="app" aria-label="任务视图"><svg width="18" height="16" viewBox="0 0 18 16"><path d="M1 1v2.500h10V1M1 15v-2.500h10V15M1 5.500h10v5H1zM15 1v14" fill="none" stroke=${w} stroke-width="1.400"/><path d="M13.500 4h3v3h-3z" fill=${w}/></svg></button>
      <button class="app" aria-label="风扇"><svg width="22" height="22" viewBox="0 0 22 22"><path d="M10.500 10.500H4C-1 9 0 1 6 1c4 0 6 4 4.500 9.500zM11.500 10.500V4C13-1 21 0 21 6c0 4-4 6-9.500 4.500zM11.500 11.500H18C23 13 22 21 16 21c-4 0-6-4-4.500-9.500zM10.500 11.500V18C9 23 1 22 1 16c0-4 4-6 9.500-4.500z" fill=${w}/></svg></button>
      <button class="app" aria-label="浏览器"><svg width="23" height="23" viewBox="0 0 23 23"><path d="M4 12h15c0-9-13-10-14 0-.5 8 9 9 13 4" fill="none" stroke=${w} stroke-width="3.400"/><path d="M3 21C0 16 12 2 20 3c2 .5 1 3 0 5" fill="none" stroke=${w} stroke-width="1.500"/></svg></button>
      <button class="app" aria-label="通知"><svg width="28" height="28" viewBox="0 0 28 28"><path d="M12 16a2 2 0 1 0-1-4c-4 1-3 7 1 7 6 0 7-8 2-10-7-2-12 5-8 11 3 4 9 4 12 0M18 6C10 2 1 8 2 17" fill="none" stroke=${w} stroke-width="1.200"/><path d="M21 1c4 0 3 6 6 10H15c3-4 2-10 6-10z" fill="#e0b000"/><path d="M19 12h4l-2 2z" fill="#e0b000"/></svg></button>
      <span class="bars"></span>
      <button class="run" aria-label="G"><svg width="26" height="26" viewBox="0 0 26 26"><path d="M23 2c-3 2-7 1-11 1C5 3 2 8 2 13c0 6 4 11 11 11 8 0 12-6 10-12h-8c2 2 3 6-1 7-5 0-6-8-1-10 4-1 9-1 10-7z" fill="#1b9df0"/><path d="M5 9C8 5 13 5 18 5" stroke="#8fe0ff" stroke-width="1.500" fill="none"/></svg></button>
      <button class="run cur2" aria-label="广联达"><svg width="23" height="23" viewBox="0 0 16 16">${ICONS.app}</svg></button>
      <button class="run" aria-label="记事"><svg width="24" height="24" viewBox="0 0 24 24"><rect width="24" height="24" rx="2" fill="#f5a623"/><path d="M4 4h13l2 14-13 2z" fill="#fff"/><path d="M6 8h8M6 11h8M7 14h5" stroke="#b9752a"/><path d="M10 18L20 3l2 1-9 14z" fill="#7b4a1c"/></svg></button>
      <span class="sp"></span>
      <div class="updn">
        <svg width="9" height="6" viewBox="0 0 9 6"><path d="M.500 5.500l4-4 4 4" fill="none" stroke="#444" stroke-width="1.800"/></svg>
        <svg width="9" height="6" viewBox="0 0 9 6"><path d="M.500.500l4 4 4-4" fill="none" stroke="#444" stroke-width="1.800"/></svg>
      </div>
      <span class="bars"></span>
      <button class="link">链接</button>
      <button class="ppl" aria-label="人脉"><svg width="16" height="17" viewBox="0 0 16 17"><circle cx="5" cy="8" r="2.700" fill="none" stroke=${w} stroke-width="1.300"/><circle cx="11" cy="4" r="3" fill="none" stroke=${w} stroke-width="1.300"/><path d="M1 16c0-6 8-6 8 0M10 9c3-1.500 5 1 5 4" fill="none" stroke=${w} stroke-width="1.300"/></svg></button>
      <div class="cpu"><span>29%</span><span>CPU使用</span></div>
      <button class="tray" aria-label="展开"><svg width="12" height="7" viewBox="0 0 12 7"><path d="M1 6l5-5 5 5" fill="none" stroke=${w} stroke-width="1.400"/></svg></button>
      <button class="tray" aria-label="提醒"><svg width="13" height="14" viewBox="0 0 13 14"><path d="M6.500 0C11 0 10 6 12.500 11H.500C3 6 2 0 6.500 0zM5 12h3v2H5z" fill=${w}/></svg></button>
      <button class="tray" aria-label="电池"><svg width="17" height="14" viewBox="0 0 17 14"><path d="M7 3.500h8.500v7H6M2 1v3M5 1v3M1 4h5v2.500H1zM3.500 7v4h3M16.500 5.500v3" fill="none" stroke=${w} stroke-width="1.200"/></svg></button>
      <button class="tray" aria-label="网络"><svg width="13" height="13" viewBox="0 0 13 13"><path d="M1 12C1 6 6 1 12 1M4 12c0-4 4-8 8-8M7 12c0-3 2-5 5-5" fill="none" stroke=${w}/><circle cx="10.500" cy="10.500" r="1.500" fill=${w}/></svg></button>
      <button class="tray" aria-label="音量"><svg width="17" height="14" viewBox="0 0 17 14"><path d="M1 5h3l3-3v10L4 9H1zM9.500 5q1.500 2 0 4M11.500 3q3 4 0 8M13.500 1q5 6 0 12" fill="none" stroke=${w} stroke-width="1.100"/></svg></button>
      <button class="kb" aria-label="键盘"><svg width="23" height="14" viewBox="0 0 23 14"><rect x=".5" y=".5" width="22" height="13" fill="none" stroke=${w}/><path d="M3 4h17M3 7h17" stroke=${w} stroke-width="1.500" stroke-dasharray="2 1"/><path d="M6 10.500h11" stroke=${w}/></svg></button>
      <button class="tray">中</button>
      <button class="kb" aria-label="输入法"><svg width="16" height="16" viewBox="0 0 16 16"><path d="M1 2l13-2 2 13-13 3z" fill="#f04a1c"/><path d="M12 4.500C8 2.500 4 4 6 6.500s6 1.500 5 4-5 1.500-7 0" fill="none" stroke="#fff" stroke-width="2.200"/></svg></button>
      <div class="clock"><span>14:41</span><span>2018/9/13</span></div>
      <button class="note" aria-label="操作中心"><svg width="30" height="28" viewBox="0 0 30 28"><path d="M2 5h16v13h-7l-4 4v-4H2z" fill=${w}/><path d="M5 9h10M5 12h10M5 15h6" stroke="#222" stroke-width="1.200"/><circle cx="19" cy="19" r="7.500" fill="#3a3f42" stroke="#9a9a9a"/><text x="19" y="23" font-size="12" fill="#fff" text-anchor="middle">1</text></svg></button>
    </footer>`;
  }

  render() {
    return html`
      <header class="title">
        ${ic("app")}
        <h1>${ui(TITLE)}</h1>
        <button aria-label="最小化"><svg width="11" height="11"><path d="M0 5.500h10" stroke="#8c8c8c"/></svg></button>
        <button aria-label="还原"><svg width="11" height="11"><path d="M.500 3.500h7v7h-7zM3 3V.500h7.500V8H8" fill="none" stroke="#8c8c8c"/></svg></button>
        <button aria-label="关闭"><svg width="11" height="11"><path d="M.500.500l10 10M10.500.500l-10 10" stroke="#8c8c8c"/></svg></button>
      </header>

      <div class="menu">
        <nav>${MENUS.map((t) => html`<button>${ui(t)}</button>`)}${item({ i: "newchg", t: "新建变更", a: "wide" })}${item({ i: "robot", t: "广小二" })}</nav>
        <div class="strip news">一个柱墩上面有两个柱..</div>
        <div class="strip acct">${item({ i: "user", t: "13907298339", a: "wide" })}<button class="tb">${ui("造价豆:0")}</button>${item({ i: "bell" })}${more}</div>
      </div>

      <div class="row3">
        <div class="strip bar-a">
          <button class="tb icon-only" aria-label="新建">${ic("doc")}</button>
          <button class="tb icon-only" aria-label="打开">${ic("open")}<i class="arr wide"></i></button>
          <button class="tb icon-only" aria-label="保存">${ic("save")}</button>${sep}
          <button class="tb icon-only" aria-label="撤销">${ic("undo")}<i class="arr wide"></i></button>${more}
        </div>
        <div class="strip bar-b">${BAR_B.map(item)}${more}</div>
        <div class="strip bar-c"><span class="combo ico">${ic("plan")}<select aria-label="视图模式"><option>二维</option></select><i class="arr"></i></span>${BAR_C.map(item)}${more}</div>
      </div>

      <div class="body">
        <aside class="side song">
          <div class="side-head"><span>模块导航栏</span>
            <button aria-label="固定"><svg width="9" height="9"><path d="M2.500 0v5M6.500 0v5M2 .5h5M0 5.500h9M4.500 5v4M5.500 0v5" stroke="#000"/></svg></button>
            <button aria-label="关闭"><svg width="8" height="8"><path d="M0 0l8 8M8 0L0 8" stroke="#000"/></svg></button></div>
          <button class="side-btn">工程设置</button>
          <button class="side-btn">绘图输入</button>
          <div class="side-tools">
            <svg width="16" height="16" viewBox="0 0 16 16"><path d="M4.500 0v9M0 4.500h9M11.500 6v9M7 10.500h9" stroke="#000" stroke-width="3"/><path d="M4.500 1v7M1 4.500h7M11.500 7v7M8 10.500h7" stroke="#00a08c"/></svg>
            <svg width="16" height="16" viewBox="0 0 16 16"><path d="M0 4.500h9M7 10.500h9" stroke="#000" stroke-width="3"/><path d="M1 4.500h7M8 10.500h7" stroke="#00a08c"/></svg>
          </div>
          <div class="tree">
            <ul>${TREE.map((n) => this.treeRow(n))}</ul>
            <div class="vscroll">
              <svg width="9" height="6" viewBox="0 0 9 6"><path d="M.500 5.500l4-4 4 4" fill="none" stroke="#505050" stroke-width="1.800"/></svg>
              <i class="top"></i><i></i>
              <svg width="9" height="6" viewBox="0 0 9 6"><path d="M.500.500l4 4 4-4" fill="none" stroke="#505050" stroke-width="1.800"/></svg>
            </div>
          </div>
          <button class="side-btn">单构件输入</button>
          <button class="side-btn">报表预览</button>
        </aside>

        <main class="main">
          <div class="r first"><div class="strip">${BAR_EDIT.map(item)}</div></div>
          <div class="r">
            <div class="strip">${grip}${combo("楼层", "第5层", "s")}${combo("构件类型", "板")}${combo("构件", "板受力筋")}${combo("名称", "SLJ-1")}${combo("分层", "分层板1", "l5")}${sep}${BAR_PART.map(item)}</div>
            <div class="strip">${BAR_AXIS.map(item)}</div>
          </div>
          <div class="r"><div class="strip stub">${grip}</div></div>
          <div class="r"><div class="strip grow">${grip}${BAR_SELECT.map(item)}${combo("选项", "", "box")}${BAR_DRAW.map(item)}${more}</div></div>

          ${this.canvas()}

          <div class="snap">
            <div class="strip">${BAR_SNAP.map(item)}${grip}${combo("偏移方式", "不偏移")}${sep}
              <label>X=${this.spin("X", "0")}</label><span class="u">mm</span>
              <label>Y=${this.spin("Y", "0")}</label><span class="u">mm</span>${sep}
              <input type="checkbox" id="rot" /><label class="rot" for="rot">旋转</label>${this.spin("角度", "0.000", "w")}<span class="u deg">°</span></div>
          </div>

          <div class="bottom">
            <div class="split"><svg width="11" height="11" viewBox="0 0 11 11"><rect x=".5" y=".5" width="10" height="10" fill="#eee" stroke="#666"/><path d="M2.500 2.500l6 6M8.500 2.500l-6 6" stroke="#222" stroke-width="1.500"/></svg><i></i></div>
            <div class="pane">
              <div class="strip">
                ${["first", "prev", "next", "last"].map((i) => html`<button class="nav2" aria-label=${i}>${ic(i)}</button>`)}${sep}
                ${["up", "down"].map((i) => html`<button class="nav2" aria-label=${i}>${ic(i)}</button>`)}${sep}
                ${BAR_GRID.map(item)}<span>单构件钢筋总重(kg)：1.287</span>
              </div>
              ${this.sheet()}
            </div>
          </div>
        </main>
      </div>

      <div class="status song">
        <span class="a">${m("X=595 Y=2592")}</span><span class="b">${m("层高:2.8m")}</span><span class="c">${m("底标高:14.75m")}</span><span class="d">${m("1(3)")}</span>
        <span class="e">按鼠标左键指定第一个角点，或拾取构件图元</span><span class="f">${m("221.4 FPS")}</span>
      </div>

      ${this.taskbar()}

      <svg class="ink" aria-hidden="true">
        <rect x="133.500" y="22.500" width="63" height="37" fill="none" stroke="#f00" stroke-width="7"/>
        <path d="M179 64L238 318" stroke="#f00" stroke-width="7" stroke-linecap="round"/>
        <path d="M171 87L176 66h4L190 83" fill="#f00" stroke="#f00" stroke-width="6" stroke-linejoin="round" stroke-linecap="round"/>
      </svg>
      <div class="ball">81</div>
    `;
  }
}
